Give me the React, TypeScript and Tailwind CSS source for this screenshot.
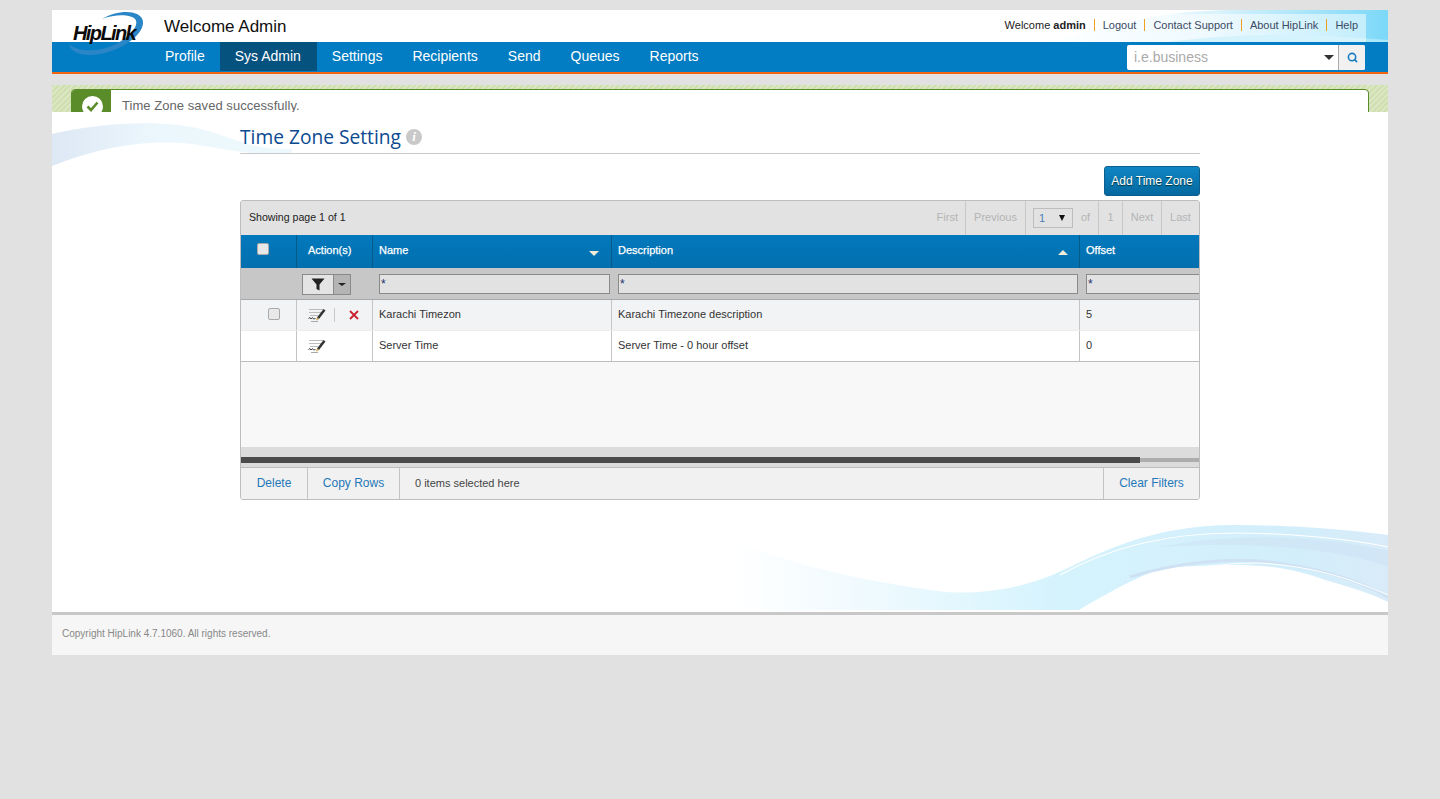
import { Search } from "lucide-react";

const navItems = ["Profile", "Sys Admin", "Settings", "Recipients", "Send", "Queues", "Reports"];
const topLinks = ["Logout", "Contact Support", "About HipLink", "Help"];

function Logo() {
  return (
    <svg width="78" height="46" viewBox="0 0 78 46" className="absolute left-[16px] top-[1px] z-20">
      <path d="M1 33 C3 47 34 48 58 33 C74 23 81 9 69 3 C61 -1 45 1 34 8 C47 3 62 3 67 8 C72 14 62 25 50 32 C33 41 11 42 1 33 Z" fill="#2a86c6" />
      <text x="5" y="29" fontFamily="'Liberation Sans', sans-serif" fontSize="20" fontWeight="700" fontStyle="italic" fill="#0b0b0b" letterSpacing="-1.6">HipLink</text>
    </svg>
  );
}

function EditIcon() {
  return (
    <svg width="18" height="14" viewBox="0 0 18 14">
      <path d="M1 1.5H15M1 4.5H13M2 7.5H10" stroke="#bcbcbc" strokeWidth="1" fill="none" />
      <path d="M0.5 10.5 L2 9.5 L3 11 L4.5 9.5 L5.5 11 L7.5 10.5" stroke="#444" strokeWidth="1" fill="none" />
      <path d="M9 9.5 L15.5 1 L17.5 2.5 L11 11 Z" fill="#333" />
      <path d="M9 9.5 L8 12.5 L11 11 Z" fill="#c89b3c" />
      <path d="M3 13.5H10" stroke="#aaa" strokeWidth="1" />
    </svg>
  );
}

function Checkbox({ className }: { className: string }) {
  return <span className={`block w-[12px] h-[12px] rounded-[2px] border border-[#a9a9a9] ${className}`} />;
}

function FilterInput() {
  return (
    <div className="h-[20px] border-[1.5px] border-[#8a8a8a] bg-[#e2e2e2] pl-[1px] text-[12px] leading-[18px] text-[#1c2f6b]">
      *
    </div>
  );
}

export default function App() {
  return (
    <div className="min-h-[799px] bg-[#e1e1e1] pt-[10px] font-['Liberation_Sans',Arial,sans-serif]">
      <div className="mx-[52px] w-[1336px]">
        {/* Header */}
        <div className="relative h-[32px] bg-white">
          <svg width="370" height="32" viewBox="0 0 370 32" className="absolute right-0 top-0">
            <defs>
              <linearGradient id="hdr" x1="0" x2="1" y1="0" y2="0">
                <stop offset="0" stopColor="#ffffff" />
                <stop offset="0.5" stopColor="#dcf3fc" />
                <stop offset="1" stopColor="#7cd8f8" />
              </linearGradient>
            </defs>
            <path d="M20 32 C90 20 130 0 220 0 L370 0 L370 32 Z" fill="url(#hdr)" />
            <path d="M150 32 C210 24 270 22 370 30 L370 32 Z" fill="#a9e7fb" />
          </svg>
          <Logo />
          <div className="absolute left-[112px] top-[7px] text-[17px] leading-[20px] text-[#111]">Welcome Admin</div>
          <div className="absolute right-[22px] top-[4px] h-[28px] flex items-center bg-white/50 pb-[6px] pl-[8px] pr-[8px] text-[11px] text-[#3b4a63]">
            <span className="text-[#222]">
              Welcome <b>admin</b>
            </span>
            {topLinks.map((l) => (
              <span key={l} className="ml-[8px] pl-[8px] border-l border-[#f0a020] leading-[12px]">
                {l}
              </span>
            ))}
          </div>
        </div>

        {/* Nav */}
        <div className="relative h-[32px] bg-[#027cc2] border-b-2 border-[#f2640f] pl-[98px] flex">
          <div className="flex h-[29px]">
            {navItems.map((n) => (
              <div
                key={n}
                className={`pl-[15px] text-[14px] leading-[28px] text-white ${n === "Sys Admin" ? "bg-[#05527f] pr-[16px]" : "pr-[15px]"}`}
              >
                {n}
              </div>
            ))}
          </div>
          <div className="absolute left-[1075px] top-[3px] flex h-[25px] w-[238px] rounded-[2px] bg-white">
            <div className="flex-1 pl-[7px] text-[14px] leading-[25px] text-[#aaa]">i.e.business</div>
            <span className="mt-[10px] mr-[4px] w-0 h-0 border-x-[5px] border-x-transparent border-t-[5px] border-t-[#333]" />
            <div className="w-[27px] flex items-center justify-center bg-[#f1f1f1] border-l border-[#aaa] rounded-r-[2px]">
              <Search size={11} strokeWidth={3.5} className="text-[#1a7cc0]" />
            </div>
          </div>
        </div>

        {/* Message */}
        <div className="mt-[11px] h-[27px] overflow-hidden pl-[19px] pr-[19px] pt-[4px] bg-[repeating-linear-gradient(135deg,#cfdfae_0px,#cfdfae_2px,#dbe7c4_2px,#dbe7c4_4px)]">
          <div className="flex h-[40px] rounded-t-[4px] border border-[#5a8c2a] bg-white">
            <div className="relative w-[39px] bg-[#5a8c2a] rounded-tl-[3px]">
              <div className="absolute left-[10px] top-[6px] w-[21px] h-[21px] rounded-full bg-white flex items-center justify-center">
                <svg width="13" height="11" viewBox="0 0 13 11">
                  <path d="M1.5 5.5 L5 9 L11.5 1.5" stroke="#5a8c2a" strokeWidth="2.6" fill="none" />
                </svg>
              </div>
            </div>
            <div className="pl-[11px] pt-[8px] text-[13px] leading-[16px] tracking-[0.05px] text-[#666]">Time Zone saved successfully.</div>
          </div>
        </div>

        {/* Body */}
        <div className="relative h-[500px] bg-white">
          <svg width="240" height="60" viewBox="0 0 240 60" className="absolute left-0 top-[8px]">
            <defs>
              <linearGradient id="waveLeft" x1="0" x2="1" y1="0" y2="0">
                <stop offset="0" stopColor="#dde8f5" />
                <stop offset="0.45" stopColor="#ecf7fd" />
                <stop offset="1" stopColor="#eef9fd" />
              </linearGradient>
            </defs>
            <path d="M0 14 C50 2 110 0 145 8 C180 16 195 30 240 29 L240 33 C195 36 170 28 140 24 C90 18 40 30 0 46 Z" fill="url(#waveLeft)" />
          </svg>
          <svg width="658" height="85" viewBox="0 0 658 85" className="absolute right-0 bottom-[2px]">
            <defs>
              <linearGradient id="wave" x1="0" x2="1" y1="0" y2="0">
                <stop offset="0" stopColor="#ffffff" />
                <stop offset="0.2" stopColor="#f0fafe" />
                <stop offset="0.5" stopColor="#d5f3fd" />
                <stop offset="0.85" stopColor="#d2eefb" />
                <stop offset="1" stopColor="#d9ebf8" />
              </linearGradient>
            </defs>
            <path d="M0 15 C50 35 120 55 215 67 C260 70 300 60 327 48 C370 28 420 0 505 0 C560 0 620 5 658 10 L658 77 C640 68 620 62 595 55 C560 42 530 40 505 40 C480 40 450 42 439 42 C420 46 395 58 349 85 L0 85 Z" fill="url(#wave)" />
            <path d="M430 22 C510 6 600 12 658 26 L658 42 C610 24 530 16 430 22 Z" fill="#cfe4f5" opacity="0.7" />
            <path d="M400 52 C450 36 500 34 530 36 C590 42 630 56 658 72" stroke="#cfe2f3" strokeWidth="3" fill="none" />
            <path d="M330 50 C380 22 440 8 505 8 C560 8 620 14 658 22" stroke="#fff" strokeWidth="1.2" fill="none" />
            <path d="M395 62 C440 44 490 38 530 38 C590 42 625 56 658 70" stroke="#fff" strokeWidth="1" fill="none" />
          </svg>

          <div className="relative ml-[188px] w-[960px]">
            <div className="flex h-[42px] items-center border-b border-[#c9c9c9] pt-[15px] pb-[6px]">
              <span className="font-['Open_Sans',sans-serif] text-[19.2px] text-[#0c4a90]">Time Zone Setting</span>
              <span className="ml-[5px] flex h-[16px] w-[16px] items-center justify-center rounded-full bg-[#c9c9c9] font-['Liberation_Serif',serif] text-[13px] font-bold italic text-white">i</span>
            </div>

            <div className="flex justify-end mt-[12px]">
              <div className="h-[30px] w-[96px] rounded-[3px] border border-[#0b5f8f] bg-gradient-to-b from-[#0f86c4] to-[#05689f] text-center text-[12px] leading-[28px] text-white [text-shadow:0_1px_1px_#033]">
                Add Time Zone
              </div>
            </div>

            {/* Grid */}
            <div className="mt-[4px] h-[300px] w-[960px] overflow-hidden rounded-[3px] border border-[#bdbdbd] bg-[#f8f8f8]">
              <div className="flex h-[34px] items-center bg-[#e2e2e2] pl-[8px] text-[10.6px] text-[#222]">
                <span className="flex-1">Showing page 1 of 1</span>
                <div className="flex h-full items-center text-[#b4b4b4] text-[11px] leading-[14px]">
                  <span className="pr-[7px] pb-[2px]">First</span>
                  <span className="flex h-full w-[61px] items-center justify-center border-x border-[#c8c8c8] pb-[2px]">Previous</span>
                  <span className="flex w-[47px] justify-end">
                    <span className="flex items-center h-[20px] w-[40px] border border-[#bdbdbd] pl-[5px] text-[#4a7fb5]">
                      1<span className="ml-[14px] w-0 h-0 border-x-[3.5px] border-x-transparent border-t-[6px] border-t-[#111]" />
                    </span>
                  </span>
                  <span className="w-[25px] pb-[2px] text-center">of</span>
                  <span className="flex h-full w-[25px] items-center justify-center border-x border-[#c8c8c8] pb-[2px]">1</span>
                  <span className="flex h-full w-[38px] items-center justify-center pb-[2px]">Next</span>
                  <span className="flex h-full w-[38px] items-center justify-center border-l border-[#c8c8c8] pb-[2px]">Last</span>
                </div>
              </div>

              <div className="grid h-[33px] grid-cols-[56px_76px_239px_468px_119px] bg-gradient-to-b from-[#0279bd] to-[#026fae] text-[11px] leading-[15px] text-white [-webkit-text-stroke:0.25px_white]">
                <div className="border-r border-[#055a8a] pl-[16px] pt-[8px]">
                  <Checkbox className="bg-[#e8e8e8]" />
                </div>
                <div className="border-r border-[#055a8a] pl-[11px] pt-[8px]">Action(s)</div>
                <div className="relative border-r border-[#055a8a] pl-[6px] pt-[8px]">
                  Name
                  <span className="absolute right-[12px] top-[16px] w-0 h-0 border-x-[5px] border-x-transparent border-t-[5px] border-t-[#f0ecd8]" />
                </div>
                <div className="relative border-r border-[#055a8a] pl-[6px] pt-[8px]">
                  Description
                  <span className="absolute right-[11px] top-[15px] w-0 h-0 border-x-[5px] border-x-transparent border-b-[5px] border-b-[#f0ecd8]" />
                </div>
                <div className="pl-[6px] pt-[8px]">Offset</div>
              </div>

              <div className="grid h-[32px] grid-cols-[56px_76px_239px_468px_119px] bg-[#c7c7c7] border-b border-[#a9a9a9] pt-[6px]">
                <div />
                <div className="pl-[5px]">
                  <div className="flex h-[21px] w-[49px] border border-[#8a8a8a]">
                    <div className="flex w-[31px] items-center justify-center bg-[#e4e4e4] border-r border-[#8a8a8a]">
                      <svg width="14" height="13" viewBox="0 0 14 13">
                        <path d="M0.5 0.5H13.5L8.5 6.5V12.5L5.5 11V6.5Z" fill="#222" />
                      </svg>
                    </div>
                    <div className="flex flex-1 items-center justify-center bg-[#b4b4b4]">
                      <span className="w-0 h-0 border-x-[4px] border-x-transparent border-t-[3px] border-t-[#222]" />
                    </div>
                  </div>
                </div>
                <div className="pl-[6px] pr-[2px]"><FilterInput /></div>
                <div className="pl-[6px] pr-[2px]"><FilterInput /></div>
                <div className="pl-[6px]"><div className="w-[130px]"><FilterInput /></div></div>
              </div>

              <div className="grid h-[31px] grid-cols-[56px_76px_239px_468px_119px] items-stretch bg-[#f2f3f5] text-[11px] leading-[28px] text-[#333] border-b border-[#ededed]">
                <div className="border-r border-[#c4c4c4] pl-[27px] pt-[8px]">
                  <Checkbox className="bg-[#e9e9e9]" />
                </div>
                <div className="flex items-center border-r border-[#c4c4c4] pl-[11px]">
                  <EditIcon />
                  <span className="ml-[8px] h-[14px] border-l border-[#c8c8c8]" />
                  <svg width="10" height="10" viewBox="0 0 10 10" className="ml-[14px]">
                    <path d="M1 1L9 9M9 1L1 9" stroke="#c8202f" strokeWidth="1.8" />
                  </svg>
                </div>
                <div className="border-r border-[#c4c4c4] pl-[6px]">Karachi Timezon</div>
                <div className="border-r border-[#c4c4c4] pl-[6px]">Karachi Timezone description</div>
                <div className="pl-[6px]">5</div>
              </div>

              <div className="grid h-[31px] grid-cols-[56px_76px_239px_468px_119px] bg-white text-[11px] leading-[28px] text-[#333] border-b border-[#bdbdbd]">
                <div className="border-r border-[#c4c4c4]" />
                <div className="flex items-center border-r border-[#c4c4c4] pl-[11px]">
                  <EditIcon />
                </div>
                <div className="border-r border-[#c4c4c4] pl-[6px]">Server Time</div>
                <div className="border-r border-[#c4c4c4] pl-[6px]">Server Time - 0 hour offset</div>
                <div className="pl-[6px]">0</div>
              </div>

              <div className="h-[85px]" />

              <div className="flex h-[21px] items-end bg-[#dcdcdc] border-b border-[#bdbdbd] pb-[4px]">
                <div className="h-[6px] w-[899px] bg-[#4b4b4b]" />
                <div className="mb-[1px] h-[4px] flex-1 bg-[#adadad]" />
              </div>

              <div className="flex h-[31px] items-center bg-[#f1f1f1] text-[12px] text-[#1f78b8]">
                <div className="flex h-full w-[67px] items-center justify-center border-r border-[#c4c4c4] pb-[2px]">Delete</div>
                <div className="flex h-full w-[92px] items-center justify-center border-r border-[#c4c4c4] pb-[2px]">Copy Rows</div>
                <div className="flex-1 pl-[15px] text-[11px] text-[#444]">0 items selected here</div>
                <div className="flex h-full w-[96px] items-center justify-center border-l border-[#c4c4c4] pb-[2px]">Clear Filters</div>
              </div>
            </div>
          </div>
        </div>

        {/* Footer */}
        <div className="h-[43px] border-t-[3px] border-[#c8c8c8] bg-[#f6f6f6] pl-[10px] pt-[11px] text-[10px] text-[#888]">
          Copyright HipLink 4.7.1060. All rights reserved.
        </div>
      </div>
    </div>
  );
}
